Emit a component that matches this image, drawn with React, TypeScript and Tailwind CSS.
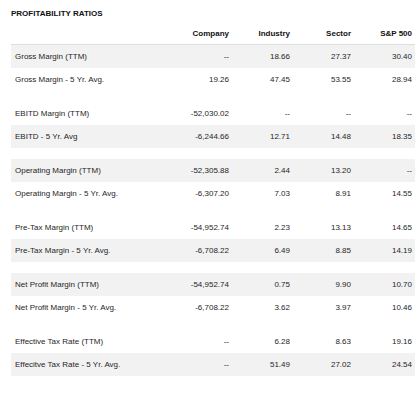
import React from "react";

type Row = { label: string; v: [string, string, string, string]; gray: boolean };

const groups: Row[][] = [
  [
    { label: "Gross Margin (TTM)", v: ["--", "18.66", "27.37", "30.40"], gray: true },
    { label: "Gross Margin - 5 Yr. Avg.", v: ["19.26", "47.45", "53.55", "28.94"], gray: false },
  ],
  [
    { label: "EBITD Margin (TTM)", v: ["-52,030.02", "--", "--", "--"], gray: false },
    { label: "EBITD - 5 Yr. Avg", v: ["-6,244.66", "12.71", "14.48", "18.35"], gray: true },
  ],
  [
    { label: "Operating Margin (TTM)", v: ["-52,305.88", "2.44", "13.20", "--"], gray: true },
    { label: "Operating Margin - 5 Yr. Avg.", v: ["-6,307.20", "7.03", "8.91", "14.55"], gray: false },
  ],
  [
    { label: "Pre-Tax Margin (TTM)", v: ["-54,952.74", "2.23", "13.13", "14.65"], gray: false },
    { label: "Pre-Tax Margin - 5 Yr. Avg.", v: ["-6,708.22", "6.49", "8.85", "14.19"], gray: true },
  ],
  [
    { label: "Net Profit Margin (TTM)", v: ["-54,952.74", "0.75", "9.90", "10.70"], gray: true },
    { label: "Net Profit Margin - 5 Yr. Avg.", v: ["-6,708.22", "3.62", "3.97", "10.46"], gray: false },
  ],
  [
    { label: "Effective Tax Rate (TTM)", v: ["--", "6.28", "8.63", "19.16"], gray: false },
    { label: "Effecitve Tax Rate - 5 Yr. Avg.", v: ["--", "51.49", "27.02", "24.54"], gray: true },
  ],
];

const headers = ["Company", "Industry", "Sector", "S&P 500"];

export default function App() {
  return (
    <div
      className="w-[420px] h-[394px] bg-white pt-[9px] pl-[11px] pr-[5px] text-[8px] text-[#262626]"
      style={{ fontFamily: '"Liberation Sans", Arial, sans-serif' }}
    >
      <div className="h-[10px] leading-[10px] font-bold text-[#111]">PROFITABILITY RATIOS</div>
      <div className="flex h-[26px] items-end pb-[5px] border-b border-[#dedede] font-bold text-[#111] leading-[10px]">
        <div className="flex-1" />
        {headers.map((h) => (
          <div key={h} className="w-[61px] pr-[3px] text-right">
            {h}
          </div>
        ))}
      </div>
      {groups.map((g, gi) => (
        <div key={gi} className={gi < groups.length - 1 ? "pb-[11px]" : ""}>
          {g.map((r) => (
            <div
              key={r.label}
              className={`flex h-[23px] items-center leading-[10px] ${r.gray ? "bg-[#f2f2f2]" : ""}`}
            >
              <div className="flex-1 pl-[4px]">{r.label}</div>
              {r.v.map((v, i) => (
                <div key={i} className="w-[61px] pr-[3px] text-right">
                  {v}
                </div>
              ))}
            </div>
          ))}
        </div>
      ))}
    </div>
  );
}
